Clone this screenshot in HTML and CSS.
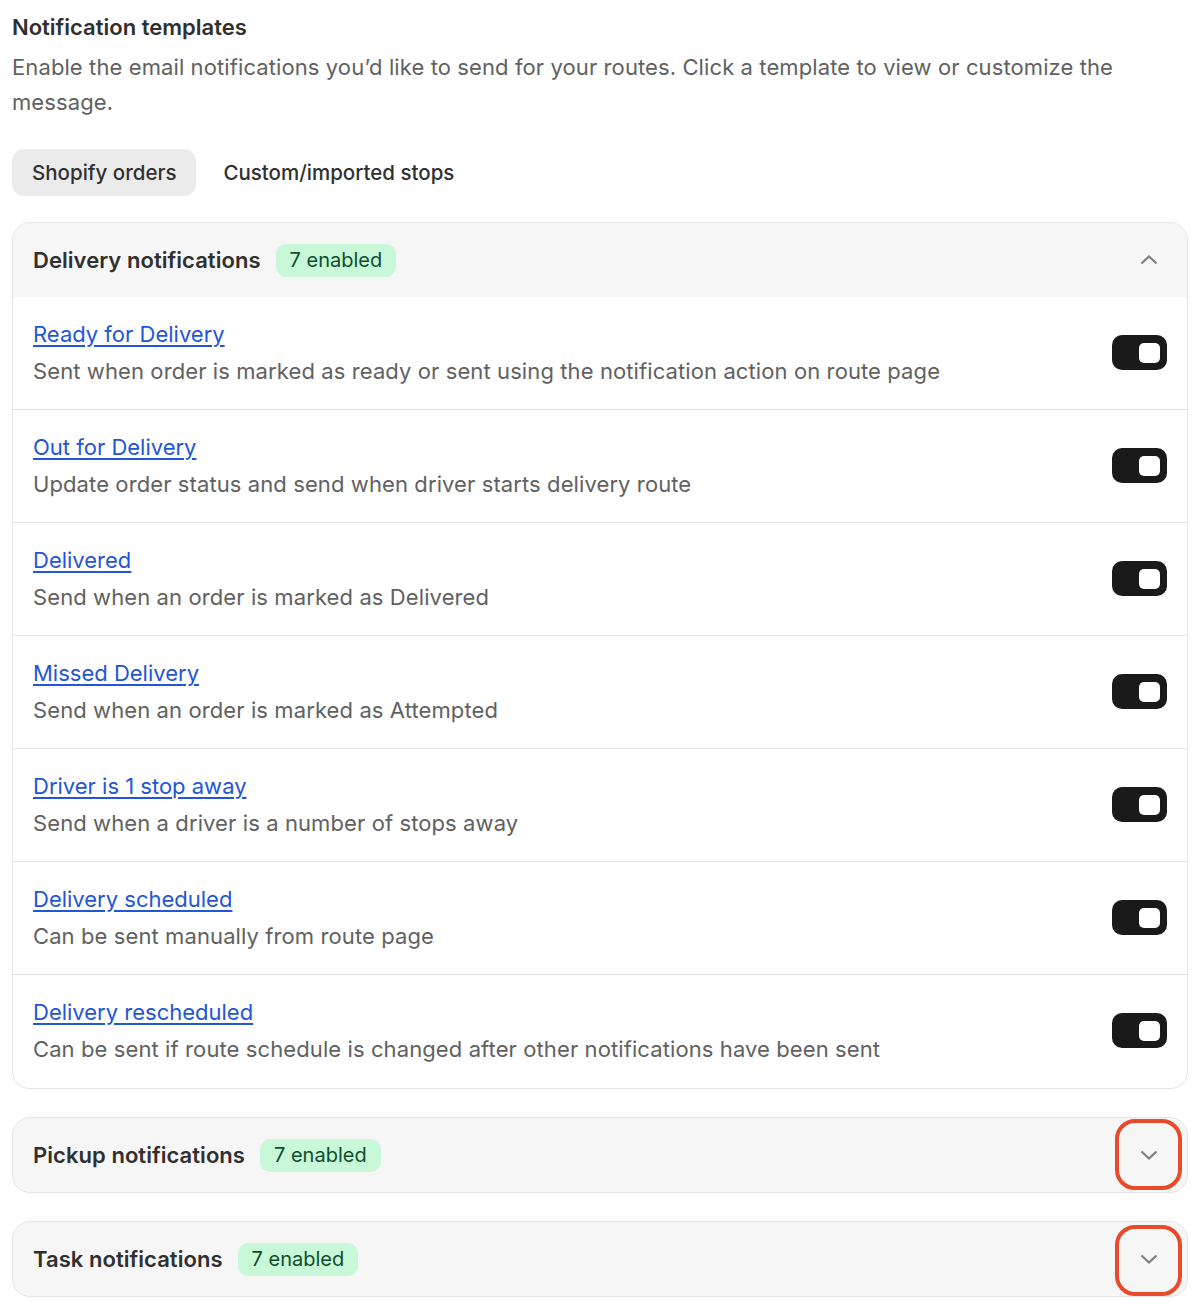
FILE: index.html
```html
<!DOCTYPE html>
<html lang="en">
<head>
<meta charset="utf-8">
<title>Notification templates</title>
<link rel="stylesheet" href="styles.css">
</head>
<body>
<main class="page">
  <h1 class="title">Notification templates</h1>
  <p class="desc">Enable the email notifications you’d like to send for your routes. Click a template to view or customize the message.</p>

  <div class="tabs">
    <button class="tab tab-active">Shopify orders</button>
    <button class="tab">Custom/imported stops</button>
  </div>

  <section class="card">
    <header class="card-head">
      <div class="head-left">
        <span class="card-title">Delivery notifications</span>
        <span class="badge">7 enabled</span>
      </div>
      <span class="chev">
        <svg width="18" height="10" viewBox="0 0 18 10"><path d="M1.5 8.5 L9 1.5 L16.5 8.5" fill="none" stroke="#7f7f7f" stroke-width="2.2"/></svg>
      </span>
    </header>
    <div class="row">
      <div class="row-text"><a class="link" href="#">Ready for Delivery</a><p class="row-desc">Sent when order is marked as ready or sent using the notification action on route page</p></div>
      <span class="toggle"><span class="knob"></span></span>
    </div>
    <div class="row">
      <div class="row-text"><a class="link" href="#">Out for Delivery</a><p class="row-desc">Update order status and send when driver starts delivery route</p></div>
      <span class="toggle"><span class="knob"></span></span>
    </div>
    <div class="row">
      <div class="row-text"><a class="link" href="#">Delivered</a><p class="row-desc">Send when an order is marked as Delivered</p></div>
      <span class="toggle"><span class="knob"></span></span>
    </div>
    <div class="row">
      <div class="row-text"><a class="link" href="#">Missed Delivery</a><p class="row-desc">Send when an order is marked as Attempted</p></div>
      <span class="toggle"><span class="knob"></span></span>
    </div>
    <div class="row">
      <div class="row-text"><a class="link" href="#">Driver is 1 stop away</a><p class="row-desc">Send when a driver is a number of stops away</p></div>
      <span class="toggle"><span class="knob"></span></span>
    </div>
    <div class="row">
      <div class="row-text"><a class="link" href="#">Delivery scheduled</a><p class="row-desc">Can be sent manually from route page</p></div>
      <span class="toggle"><span class="knob"></span></span>
    </div>
    <div class="row">
      <div class="row-text"><a class="link" href="#">Delivery rescheduled</a><p class="row-desc">Can be sent if route schedule is changed after other notifications have been sent</p></div>
      <span class="toggle"><span class="knob"></span></span>
    </div>
  </section>

  <section class="card card-collapsed">
    <header class="card-head">
      <div class="head-left">
        <span class="card-title">Pickup notifications</span>
        <span class="badge">7 enabled</span>
      </div>
      <span class="chev">
        <svg width="18" height="10" viewBox="0 0 18 10"><path d="M1.5 1.5 L9 8.5 L16.5 1.5" fill="none" stroke="#7f7f7f" stroke-width="2.2"/></svg>
      </span>
      <span class="mark"></span>
    </header>
  </section>

  <section class="card card-collapsed">
    <header class="card-head">
      <div class="head-left">
        <span class="card-title">Task notifications</span>
        <span class="badge">7 enabled</span>
      </div>
      <span class="chev">
        <svg width="18" height="10" viewBox="0 0 18 10"><path d="M1.5 1.5 L9 8.5 L16.5 1.5" fill="none" stroke="#7f7f7f" stroke-width="2.2"/></svg>
      </span>
      <span class="mark mark-low"></span>
    </header>
  </section>
</main>
</body>
</html>
```

FILE: styles.css
```css
* { box-sizing: border-box; }

html, body {
  margin: 0;
  padding: 0;
  background: #ffffff;
}

body {
  font-family: Inter, "Noto Sans", "Liberation Sans", sans-serif;
  color: #303030;
}

.page {
  padding: 12px 16px 12px 12px;
}

.title {
  margin: 0;
  font-size: 22px;
  line-height: 30px;
  font-weight: 600;
  color: #303030;
}

.desc {
  margin: 8px 0 0;
  font-size: 22px;
  line-height: 35px;
  color: #616161;
  letter-spacing: 0.1px;
}

.tabs {
  display: flex;
  gap: 7px;
  margin-top: 29px;
}

.tab {
  font-family: inherit;
  font-size: 20.5px;
  font-weight: 500;
  color: #303030;
  background: transparent;
  border: none;
  height: 47px;
  padding: 0 20px;
  border-radius: 12px;
}

.tab-active {
  background: #ebebeb;
}

.card {
  margin-top: 26px;
  border: 1px solid #e3e3e3;
  border-radius: 18px;
  overflow: hidden;
  background: #ffffff;
  padding-bottom: 1px;
}

.card-collapsed {
  margin-top: 28px;
  overflow: visible;
  background: #f6f6f6;
  padding-bottom: 0;
}

.card-head {
  position: relative;
  display: flex;
  align-items: center;
  justify-content: space-between;
  height: 74px;
  padding: 0 20px;
  background: #f6f6f6;
  border-radius: 18px 18px 0 0;
}

.card-collapsed .card-head {
  border-radius: 18px;
}

.head-left {
  display: flex;
  align-items: center;
  gap: 15px;
}

.card-title {
  font-size: 22px;
  font-weight: 600;
  color: #303030;
  letter-spacing: 0.05px;
}

.badge {
  display: inline-flex;
  align-items: center;
  height: 33px;
  padding: 0 14px;
  border-radius: 10px;
  background: #c8f8d8;
  color: #0f4d2e;
  font-size: 20px;
  font-weight: 400;
}

.chev {
  width: 36px;
  height: 36px;
  display: flex;
  align-items: center;
  justify-content: center;
}

.mark {
  position: absolute;
  right: 5px;
  top: 1px;
  width: 67px;
  height: 71px;
  border: 4px solid #e84a2c;
  border-radius: 20px;
  pointer-events: none;
}

.mark-low {
  top: 3px;
}

.row {
  display: flex;
  align-items: center;
  justify-content: space-between;
  padding: 20px 20px 21px;
  border-top: 1px solid #e3e3e3;
}

.card-head + .row {
  border-top: none;
}

.row-text {
  display: flex;
  flex-direction: column;
}

.link {
  font-size: 22px;
  line-height: 34px;
  color: #2356d6;
  text-decoration: underline;
  text-underline-offset: 3px;
  text-decoration-thickness: 1.5px;
  align-self: flex-start;
}

.row-desc {
  margin: 3px 0 0;
  font-size: 22px;
  line-height: 34px;
  color: #616161;
  letter-spacing: 0.1px;
}

.toggle {
  flex: none;
  width: 55px;
  height: 35px;
  border-radius: 10px;
  background: #1a1a1a;
  display: flex;
  align-items: center;
  justify-content: flex-end;
  padding-right: 7px;
}

.knob {
  width: 21px;
  height: 20px;
  border-radius: 5px;
  background: #ffffff;
}
```
